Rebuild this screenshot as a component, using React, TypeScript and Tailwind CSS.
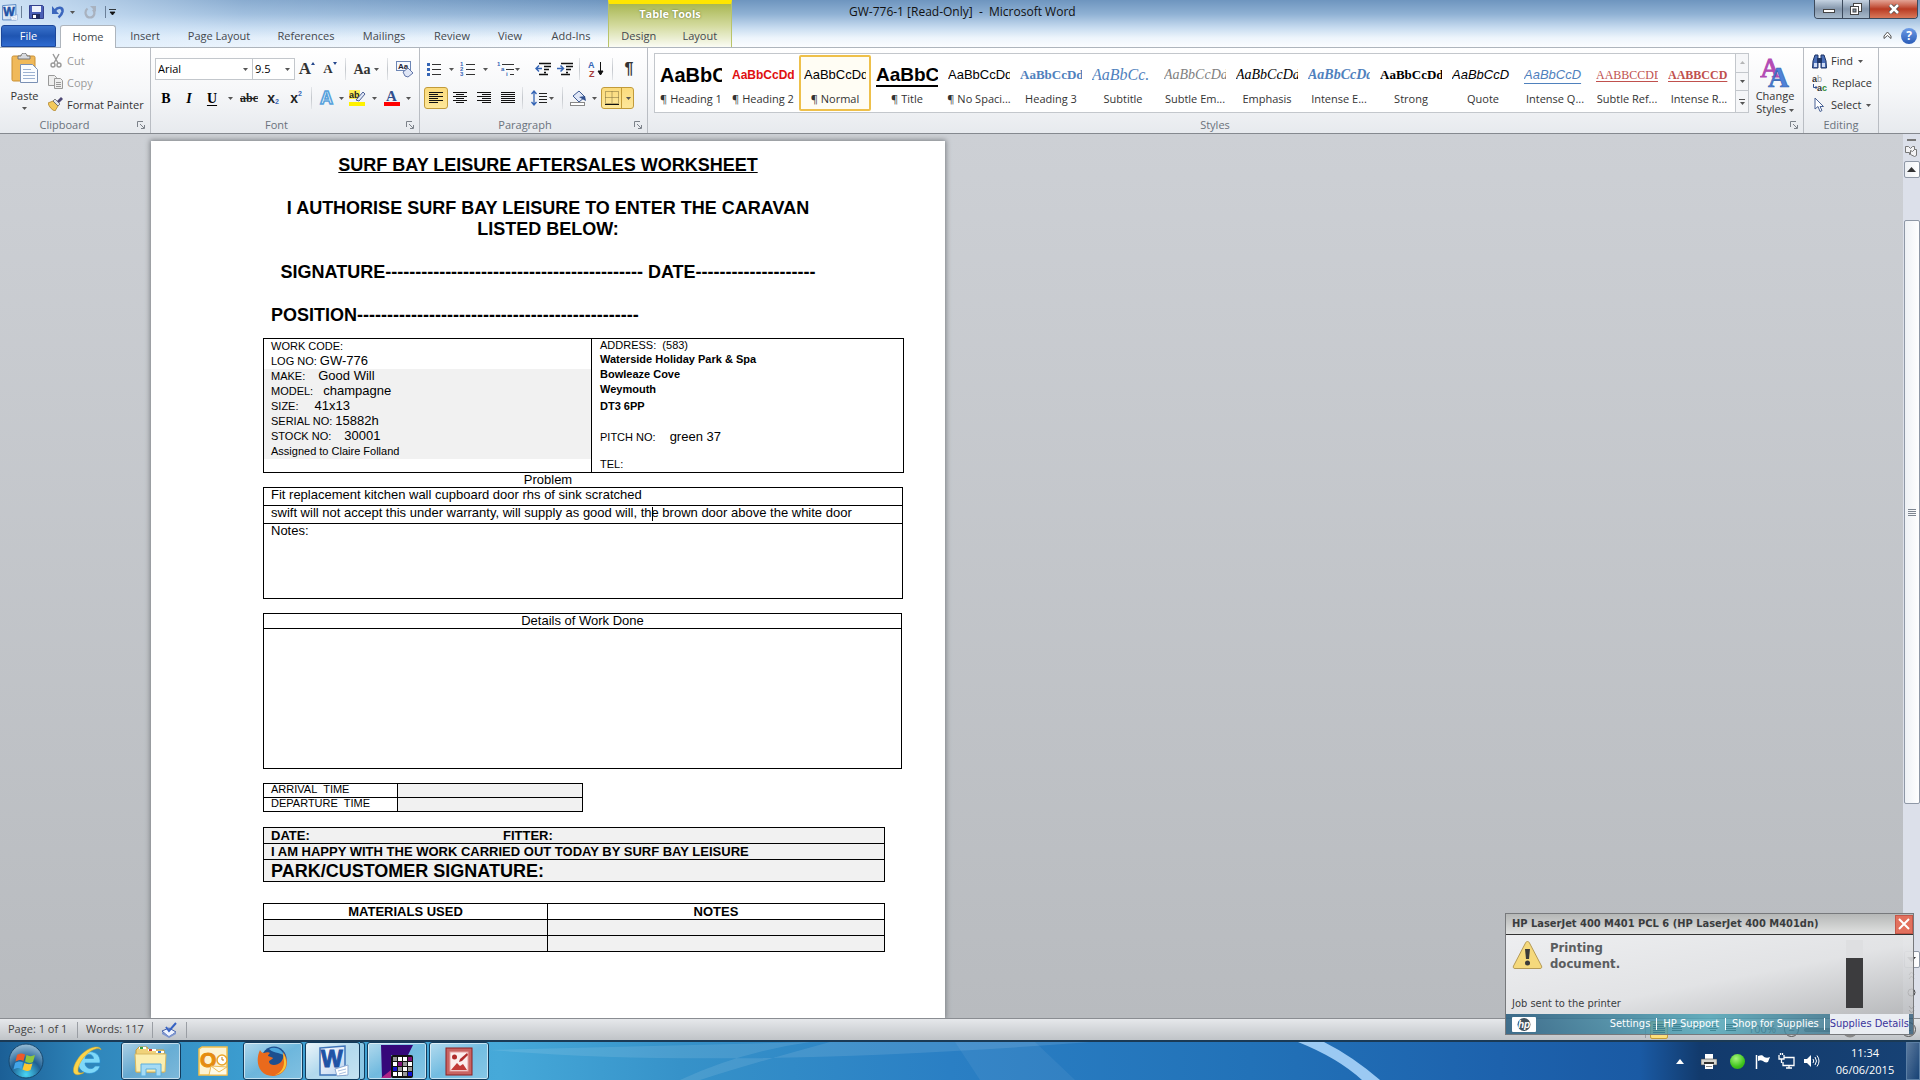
import type { ReactNode } from 'react'

const UI = "font-['Open_Sans',sans-serif]"

type Tab = { label: string; width: string }

const tabs: Tab[] = [
  { label: 'Insert', width: 'w-[58px]' },
  { label: 'Page Layout', width: 'w-[90px]' },
  { label: 'References', width: 'w-[84px]' },
  { label: 'Mailings', width: 'w-[72px]' },
  { label: 'Review', width: 'w-[64px]' },
  { label: 'View', width: 'w-[52px]' },
  { label: 'Add-Ins', width: 'w-[70px]' },
]

const SANS = "font-['Liberation_Sans',sans-serif]"
const SERIF = "font-['Liberation_Serif',serif]"

const styleItems = [
  { name: '¶ Heading 1', sample: 'AaBbC', cls: `${SANS} text-[20px] font-bold text-black` },
  { name: '¶ Heading 2', sample: 'AaBbCcDd', cls: `${SANS} text-[12px] font-bold text-[#e01010]` },
  { name: '¶ Normal', sample: 'AaBbCcDd', cls: `${SANS} text-[13px] text-black`, active: true },
  { name: '¶ Title', sample: 'AaBbC', cls: `${SANS} text-[19px] font-bold text-black underline underline-offset-4 decoration-2` },
  { name: '¶ No Spaci...', sample: 'AaBbCcDd', cls: `${SANS} text-[13px] text-black` },
  { name: 'Heading 3', sample: 'AaBbCcDd', cls: `${SERIF} text-[13px] font-bold text-[#4f81bd]` },
  { name: 'Subtitle', sample: 'AaBbCc.', cls: `${SERIF} text-[16px] italic text-[#4f81bd]` },
  { name: 'Subtle Em...', sample: 'AaBbCcDd', cls: `${SERIF} text-[14px] italic text-[#808080]` },
  { name: 'Emphasis', sample: 'AaBbCcDd', cls: `${SERIF} text-[14px] italic text-black` },
  { name: 'Intense E...', sample: 'AaBbCcDd', cls: `${SERIF} text-[14px] font-bold italic text-[#4f81bd]` },
  { name: 'Strong', sample: 'AaBbCcDd', cls: `${SERIF} text-[13px] font-bold text-black` },
  { name: 'Quote', sample: 'AaBbCcD', cls: `${SANS} text-[13px] italic text-black` },
  { name: 'Intense Q...', sample: 'AaBbCcD', cls: `${SANS} text-[13px] italic text-[#4f81bd] underline underline-offset-4` },
  { name: 'Subtle Ref...', sample: 'AABBCCDD', cls: `${SERIF} text-[12px] text-[#c0504d] underline underline-offset-2` },
  { name: 'Intense R...', sample: 'AABBCCD', cls: `${SERIF} text-[12px] font-bold text-[#c0504d] underline underline-offset-2` },
]

function Caret({ className = '' }: { className?: string }) {
  return (
    <svg width="5" height="3" viewBox="0 0 5 3" className={`shrink-0 ${className}`} aria-hidden>
      <path d="M0 0h5L2.5 3z" fill="#555" />
    </svg>
  )
}

function Tool({ label, className, children }: { label: string; className: string; children: ReactNode }) {
  return (
    <button aria-label={label} className={`flex h-[22px] shrink-0 items-center justify-center ${className}`}>
      {children}
    </button>
  )
}

function Sep({ className = 'mx-1' }: { className?: string }) {
  return <div className={`h-[22px] w-px shrink-0 bg-gradient-to-b from-[#e4e6e9] via-[#c3c7cc] to-[#e4e6e9] ${className}`} />
}

function Group({ title, launcher, className = '', children }: { title: string; launcher?: boolean; className?: string; children: ReactNode }) {
  return (
    <section className={`flex shrink-0 flex-col border-r border-[#b9bdc3] ${className}`}>
      <div className="h-[69px]">{children}</div>
      <div className="flex h-[16px] items-center">
        <span className={`grow text-center text-[#6a727c] ${launcher ? 'pr-2' : ''}`}>{title}</span>
        {launcher && (
          <button aria-label={`${title} options`} className="mr-[5px]">
            <svg width="8" height="8" viewBox="0 0 8 8" fill="none" stroke="#7c828a" aria-hidden>
              <path d="M.5 6V.5H6M3 3l4 4M7.500 4v3.500H4" />
            </svg>
          </button>
        )}
      </div>
    </section>
  )
}

function Bars({ widths, anchor = 'start' }: { widths: number[]; anchor?: 'start' | 'middle' | 'end' }) {
  return (
    <svg width="14" height="12" viewBox="0 0 14 12" aria-hidden>
      {widths.map((w, i) => (
        <rect key={i} x={anchor === 'start' ? 0 : anchor === 'end' ? 14 - w : (14 - w) / 2} y={i * 2} width={w} height="1" fill="#111" />
      ))}
    </svg>
  )
}

function ListIcon({ kind }: { kind: 'dots' | 'numbers' | 'levels' }) {
  return (
    <svg width="18" height="16" viewBox="0 0 18 16" aria-hidden>
      {kind === 'dots' && [2, 7, 12].map((y) => <rect key={y} x="1" y={y} width="3" height="3" fill="#3565b5" />)}
      {kind === 'numbers' &&
        ['1', '2', '3'].map((n, i) => (
          <text key={n} x="0" y={5 + i * 5} fontSize="6" fontWeight="bold" fill="#3565b5" fontFamily="Liberation Sans">
            {n}
          </text>
        ))}
      {kind === 'levels' ? (
        <>
          <text x="0" y="5" fontSize="6" fontWeight="bold" fill="#3565b5" fontFamily="Liberation Sans">1</text>
          <text x="4" y="10" fontSize="6" fontWeight="bold" fill="#3565b5" fontFamily="Liberation Sans">a</text>
          <text x="9" y="15" fontSize="6" fontWeight="bold" fill="#3565b5" fontFamily="Liberation Sans">i</text>
          <path d="M5 3.500h12M9 8.500h8M13 13.500h4" stroke="#333" />
        </>
      ) : (
        <path d="M6 3.500h9M6 8.500h9M6 13.500h9" stroke="#333" />
      )}
    </svg>
  )
}

function IndentIcon({ flip }: { flip?: boolean }) {
  return (
    <svg width="16" height="14" viewBox="0 0 16 14" aria-hidden>
      <path d="M4 1.500h12M9 4.500h7M9 7.500h5M9 10.500h2M4 12.500h9" stroke="#111" strokeWidth="1.500" />
      <path d={flip ? 'M0 6.500h6M3.500 3.500l3 3-3 3' : 'M7 6.500H1M4 3.500l-3 3 3 3'} stroke="#3565b5" strokeWidth="1.500" fill="none" />
    </svg>
  )
}

function WordLogo({ size }: { size: number }) {
  return (
    <svg width={size} height={size} viewBox="0 0 32 32" aria-hidden>
      <defs>
        <linearGradient id="wl" x1="0" y1="0" x2="1" y2="1">
          <stop offset="0" stopColor="#fff" />
          <stop offset="1" stopColor="#bcd3ef" />
        </linearGradient>
      </defs>
      <path d="M3 3l25-2v29H3z" fill="url(#wl)" stroke="#3f74b8" strokeWidth="1.500" />
      <text x="4" y="22" fontSize="23" fontWeight="bold" fill="#1f53a5" stroke="#1f53a5" fontFamily="Liberation Sans">W</text>
      <path d="M18 24l13-4 0 10-11 1z" fill="#fff" stroke="#8ba9d2" />
      <path d="M21 26l8-2M22 29l7-2" stroke="#a9bfdf" />
    </svg>
  )
}

function QuickAccess() {
  return (
    <div className="flex h-6 items-center">
      <span className="ml-[1px]"><WordLogo size={17} /></span>
      <div className="ml-[3px] h-3 w-px bg-[#6b8099]" />
      <button aria-label="Save" className="ml-[7px]">
        <svg width="15" height="14" viewBox="0 0 15 14" aria-hidden>
          <path d="M.5.5h13l1 1v12H.5z" fill="#4a5fb5" stroke="#34408c" />
          <rect x="3" y="1" width="9" height="6" fill="#eef2fb" />
          <rect x="3" y="9" width="8" height="5" fill="#1f2a5c" />
          <rect x="4" y="10" width="3" height="3" fill="#fff" />
        </svg>
      </button>
      <button aria-label="Undo" className="ml-2">
        <svg width="13" height="14" viewBox="0 0 13 14" aria-hidden>
          <path d="M3 5.500C6 1.500 11 2 10.500 6.500 10 9 8.500 11 6.500 12.500" fill="none" stroke="#3b66bd" strokeWidth="2.600" />
          <path d="M0 1v8h7z" fill="#3b66bd" />
        </svg>
      </button>
      <Caret className="ml-[5px]" />
      <button aria-label="Repeat" className="ml-[9px]">
        <svg width="12" height="13" viewBox="0 0 12 13" aria-hidden>
          <path d="M3.500 2.500C0 5.500 1.500 11.500 6 11.500c4.500 0 5.500-5 3-8" fill="none" stroke="#a9b2bf" strokeWidth="2.200" />
          <path d="M6 0h6v6z" fill="#a9b2bf" />
        </svg>
      </button>
      <div className="ml-[9px] h-3 w-px bg-[#6b8099]" />
      <button aria-label="Customize toolbar" className="ml-[3px]">
        <svg width="7" height="7" viewBox="0 0 7 7" aria-hidden>
          <path d="M0 .5h7M1 3h5L3.500 6z" stroke="#111" fill="#111" strokeWidth=".8" />
        </svg>
      </button>
    </div>
  )
}

function Header() {
  return (
    <header className="flex h-[47px] shrink-0 bg-[linear-gradient(to_bottom,#6e95bf_0px,#8fb1d4_14px,#c8dcf0_28px,#eef5fc_38px,#fbfdff_47px)] text-[#44484e]">
      <div className="flex w-[608px] shrink-0 flex-col bg-gradient-to-r from-[#d8eafb]/90 via-[#c9e0f7]/30 via-40% to-transparent">
        <QuickAccess />
        <nav className="flex grow items-stretch pt-px">
          <button className="ml-px w-[55px] rounded-t-[3px] border border-[#1c479a] bg-gradient-to-b from-[#3a72cb] via-[#1f55b2] to-[#2f6bd0] text-white">File</button>
          <button className="z-10 -mb-px ml-1 w-[56px] rounded-t-[3px] border border-b-0 border-[#aeb5bd] bg-white">Home</button>
          {tabs.map((t) => (
            <button key={t.label} className={`shrink-0 ${t.width}`}>{t.label}</button>
          ))}
        </nav>
      </div>
      <div className="flex w-[124px] shrink-0 flex-col border-x border-t-4 border-x-[#b9c46a] border-t-[#ffe600] bg-gradient-to-b from-[#a9b751] via-[#d3da9d] to-[#fbfcf4]">
        <div className="h-5 text-center leading-5 font-bold text-white [text-shadow:0_0_2px_#5c6620]">Table Tools</div>
        <nav className="flex grow items-stretch pt-px">
          <button className="w-[61px]">Design</button>
          <button className="w-[64px]">Layout</button>
        </nav>
      </div>
      <div className="flex grow flex-col">
        <div className="flex h-6 items-start">
          <h1 className="ml-[117px] grow text-[12px] leading-6 text-[#111]">GW-776-1 [Read-Only]&nbsp; -&nbsp; Microsoft Word</h1>
          <div className="mr-0.5 flex h-[19px] overflow-hidden rounded-b-[4px] border border-t-0 border-[#3c4a5c]">
            <button aria-label="Minimize" className="flex w-7 items-center justify-center border-r border-[#3c4a5c] bg-gradient-to-b from-[#c5d3e2] via-[#8496ab] via-50% to-[#a8bacb] pt-1">
              <span className="h-1 w-3 border border-[#444] bg-white" />
            </button>
            <button aria-label="Restore" className="flex w-[27px] items-center justify-center border-r border-[#3c4a5c] bg-gradient-to-b from-[#c5d3e2] via-[#8496ab] via-50% to-[#a8bacb]">
              <svg width="12" height="12" viewBox="0 0 12 12" aria-hidden>
                <rect x="3.500" y=".5" width="8" height="8" fill="#fff" stroke="#444" />
                <rect x=".5" y="3.500" width="8" height="8" fill="#fff" stroke="#444" />
                <rect x="3" y="6" width="3" height="3" fill="#8496ab" stroke="#444" />
              </svg>
            </button>
            <button aria-label="Close" className="flex w-[47px] items-center justify-center bg-gradient-to-b from-[#e3a395] via-[#b93a22] via-50% to-[#d9785a]">
              <svg width="12" height="10" viewBox="0 0 12 10" aria-hidden>
                <path d="M2 1l8 8M10 1L2 9" stroke="#444" strokeWidth="4" />
                <path d="M2 1l8 8M10 1L2 9" stroke="#fff" strokeWidth="2.600" />
              </svg>
            </button>
          </div>
        </div>
        <div className="flex grow items-center justify-end gap-[9px] pr-[3px]">
          <button aria-label="Minimize ribbon">
            <svg width="9" height="9" viewBox="0 0 9 9" aria-hidden>
              <path d="M1 5l3.500-4L8 5v2.500L4.500 4.500 1 7.500z" fill="#fff" stroke="#555" />
            </svg>
          </button>
          <button aria-label="Help" className="h-4 w-4 rounded-full bg-gradient-to-b from-[#6d9be6] to-[#2a5cb8] text-[12px] leading-4 font-bold text-white">?</button>
        </div>
      </div>
    </header>
  )
}

function Clipboard() {
  return (
    <Group title="Clipboard" launcher className="w-[151px]">
      <div className="flex pt-[5px]">
        <button className="ml-[6px] flex w-[37px] flex-col items-center">
          <svg width="28" height="31" viewBox="0 0 28 31" aria-hidden>
            <rect x="1" y="3" width="23" height="25" rx="1.500" fill="#f0b95a" stroke="#c98f32" />
            <path d="M7 6V3h3c0-4 6-4 6 0h3v3z" fill="#d8dade" stroke="#777" />
            <path d="M9.500 11.500h12l5 5v13h-17z" fill="#fafcff" stroke="#7a90b4" />
            <path d="M12 16.500h8M12 19.500h12M12 22.500h12M12 25.500h12" stroke="#9db2d2" />
          </svg>
          <span className="mt-1 leading-4 text-[#333]">Paste</span>
          <Caret className="mt-[3px]" />
        </button>
        <div className="ml-[5px] flex flex-col text-[#9a9a9a]">
          <button className="flex h-[22px] items-start gap-1 pl-px">
            <svg width="14" height="15" viewBox="0 0 14 15" fill="none" stroke="#999" strokeWidth="1.400" aria-hidden>
              <path d="M4 1l5 9M10 1L5 10" />
              <circle cx="4" cy="12" r="2" />
              <circle cx="10" cy="12" r="2" />
            </svg>
            <span className="leading-4">Cut</span>
          </button>
          <button className="flex h-[22px] items-start gap-1">
            <svg width="15" height="14" viewBox="0 0 15 14" fill="#eee" stroke="#999" aria-hidden>
              <path d="M.5.5h6l2 2v8h-8z" />
              <path d="M6.500 3.500h6l2 2v8h-8z" />
              <path d="M8 7.500h5M8 9.500h5M8 11.500h5" />
            </svg>
            <span className="leading-4">Copy</span>
          </button>
          <button className="flex h-[20px] items-start gap-1 text-[#333]">
            <svg width="15" height="14" viewBox="0 0 15 14" aria-hidden>
              <path d="M0 6l5-2 5 5-3 5C4 13 1 10 0 6z" fill="#f3c95c" stroke="#a97a1c" strokeWidth=".7" />
              <path d="M5 4l2-2 5 5-2 2z" fill="#dfe3ec" stroke="#555" strokeWidth=".7" />
              <path d="M9 4l4-4 2 2-4 4z" fill="#4c4674" />
            </svg>
            <span className="leading-4">Format Painter</span>
          </button>
        </div>
      </div>
    </Group>
  )
}

function FontGroup() {
  return (
    <Group title="Font" launcher className="w-[269px] pl-1">
      <div className="flex h-[22px] items-center mt-[10px]">
        <div className="relative flex w-[98px] items-center border border-[#c3c7cc] bg-white">
          <select aria-label="Font name" className="h-5 w-full appearance-none pl-[2px] leading-5 text-black">
            <option>Arial</option>
          </select>
          <Caret className="pointer-events-none absolute right-1" />
        </div>
        <div className="relative flex w-[42px] items-center border border-l-0 border-[#c3c7cc] bg-white">
          <select aria-label="Font size" className="h-5 w-full appearance-none pl-[2px] leading-5 text-black">
            <option>9.5</option>
          </select>
          <Caret className="pointer-events-none absolute right-1" />
        </div>
        <Tool label="Grow font" className={`w-6 ${SERIF} text-[17px] font-bold text-[#333]`}>
          A<svg width="4" height="3" viewBox="0 0 4 3" className="mb-3" aria-hidden><path d="M0 3h4L2 0z" fill="#24468c" /></svg>
        </Tool>
        <Tool label="Shrink font" className={`w-[22px] ${SERIF} text-[13px] font-bold text-[#333]`}>
          A<svg width="4" height="3" viewBox="0 0 4 3" className="mb-3" aria-hidden><path d="M0 0h4L2 3z" fill="#24468c" /></svg>
        </Tool>
        <Sep className="mr-[2px] ml-1" />
        <Tool label="Change case" className={`w-9 gap-[3px] ${SERIF} text-[14px] font-bold text-[#333]`}>
          Aa<Caret />
        </Tool>
        <Sep className="mx-[3px]" />
        <Tool label="Clear formatting" className="w-7">
          <svg width="18" height="17" viewBox="0 0 18 17" aria-hidden>
            <rect x=".5" y=".5" width="14" height="9" fill="#f6f9ff" stroke="#6d86b5" />
            <text x="2" y="8" fontSize="8" fontWeight="bold" fill="#223" fontFamily="Liberation Sans">Aa</text>
            <path d="M7 11l5-4 5 5-5 4-3-1z" fill="#dfe6f6" stroke="#6175a8" />
          </svg>
        </Tool>
      </div>
      <div className="mt-[7px] flex h-[22px] items-center text-[14px]">
        <Tool label="Bold" className={`w-[22px] ${SERIF} font-bold text-black`}>B</Tool>
        <Tool label="Italic" className={`w-6 ${SERIF} font-bold text-black italic`}>I</Tool>
        <Tool label="Underline" className={`w-[22px] ${SERIF} font-bold text-black underline underline-offset-2`}>U</Tool>
        <Tool label="Underline options" className="w-[14px]"><Caret /></Tool>
        <Tool label="Strikethrough" className={`w-6 ${SERIF} text-[12px] font-bold text-[#222] line-through`}>abc</Tool>
        <Tool label="Subscript" className={`w-6 ${SANS} font-bold text-[#222]`}>
          x<span className="mt-2 text-[7px] text-[#3565b5]">2</span>
        </Tool>
        <Tool label="Superscript" className={`w-[22px] ${SANS} font-bold text-[#222]`}>
          x<span className="mb-2 text-[7px] text-[#3565b5]">2</span>
        </Tool>
        <Sep />
        <Tool label="Text effects" className="w-[30px] gap-1">
          <svg width="16" height="16" viewBox="0 0 16 16" aria-hidden>
            <text x="1" y="14" fontSize="18" fontWeight="bold" fill="#fff" stroke="#58a2dc" strokeWidth="1.600" fontFamily="Liberation Sans">A</text>
          </svg>
          <Caret />
        </Tool>
        <Tool label="Highlight" className="w-[34px] gap-[6px]">
          <svg width="17" height="16" viewBox="0 0 17 16" aria-hidden>
            <rect x="0" y="0" width="11" height="9" fill="#ffee55" />
            <text x="0" y="8" fontSize="9" fontWeight="bold" fill="#222" fontFamily="Liberation Sans">ab</text>
            <path d="M7 10l7-8 2 2-6 7z" fill="#dfe6f6" stroke="#4e6296" />
            <rect x="0" y="12" width="16" height="4" fill="#fff200" />
          </svg>
          <Caret />
        </Tool>
        <Tool label="Font color" className="w-[34px] gap-[6px]">
          <svg width="16" height="16" viewBox="0 0 16 16" aria-hidden>
            <text x="2" y="11" fontSize="15" fontWeight="bold" fill="#31508f" fontFamily="Liberation Serif">A</text>
            <rect x="0" y="12" width="16" height="4" fill="#f00" />
          </svg>
          <Caret />
        </Tool>
      </div>
    </Group>
  )
}

function Paragraph() {
  return (
    <Group title="Paragraph" launcher className="w-[228px] pl-1">
      <div className="mt-[10px] flex h-[22px] items-center">
        <Tool label="Bullets" className="w-8 gap-[5px]"><ListIcon kind="dots" /><Caret /></Tool>
        <Tool label="Numbering" className="w-9 gap-[5px]"><ListIcon kind="numbers" /><Caret /></Tool>
        <Tool label="Multilevel list" className="w-8"><ListIcon kind="levels" /><Caret /></Tool>
        <div className="w-[8px]" />
        <Tool label="Decrease indent" className="w-[22px]"><IndentIcon /></Tool>
        <Tool label="Increase indent" className="w-[22px]"><IndentIcon flip /></Tool>
        <Sep className="mr-1 ml-[3px]" />
        <Tool label="Sort" className="w-6">
          <svg width="16" height="18" viewBox="0 0 16 18" aria-hidden>
            <text x="0" y="8" fontSize="9" fontWeight="bold" fill="#3565b5" fontFamily="Liberation Sans">A</text>
            <text x="1" y="17" fontSize="9" fontWeight="bold" fill="#a33a3a" fontFamily="Liberation Sans">Z</text>
            <path d="M12.500 2v12M10 11l2.500 4 2.500-4z" stroke="#111" fill="#111" />
          </svg>
        </Tool>
        <Sep />
        <Tool label="Show marks" className={`w-6 ${SANS} text-[16px] font-bold text-[#333]`}>¶</Tool>
      </div>
      <div className="mt-[7px] flex h-[22px] items-center">
        <Tool label="Align left" className="w-6 rounded-[3px] border border-[#c29b3a] bg-gradient-to-b from-[#fbdb7c] to-[#fde79a]"><Bars widths={[14, 9, 14, 9, 14, 9]} /></Tool>
        <Tool label="Center" className="w-6"><Bars widths={[14, 8, 14, 8, 14, 8]} anchor="middle" /></Tool>
        <Tool label="Align right" className="w-6"><Bars widths={[14, 9, 14, 9, 14, 9]} anchor="end" /></Tool>
        <Tool label="Justify" className="w-6"><Bars widths={[14, 14, 14, 14, 14, 14]} /></Tool>
        <Sep className="mr-[5px] ml-[2px]" />
        <Tool label="Line spacing" className="w-7 gap-[2px]">
          <svg width="16" height="16" viewBox="0 0 16 16" aria-hidden>
            <path d="M3 1v14M.5 4L3 1l2.500 3M.5 12L3 15l2.500-3" stroke="#3565b5" strokeWidth="1.300" fill="none" />
            <path d="M8 3.500h8M8 6.500h8M8 9.500h8M8 12.500h8" stroke="#222" />
          </svg>
          <Caret />
        </Tool>
        <Sep className="mr-1 ml-[6px]" />
        <Tool label="Shading" className="w-8 gap-[5px]">
          <svg width="17" height="16" viewBox="0 0 17 16" aria-hidden>
            <path d="M3 6l6-5 6 6-6 5z" fill="#dfe6f6" stroke="#3f5b93" />
            <path d="M9 7l6-1 1 5-2-1z" fill="#31508f" />
            <rect x=".5" y="12.500" width="14" height="3" fill="#fff" stroke="#888" />
          </svg>
          <Caret />
        </Tool>
        <Tool label="Borders" className="ml-[2px] w-[33px] rounded-[3px] border border-[#c29b3a] bg-gradient-to-b from-[#fbdb7c] to-[#fde79a]">
          <svg width="14" height="14" viewBox="0 0 14 14" aria-hidden>
            <path d="M.5.5h13v12H.5zM7 .5v12M.5 6.500h13" stroke="#7a6a38" strokeDasharray="1 1" fill="none" />
            <path d="M0 13.500h14" stroke="#111" />
          </svg>
          <span className="ml-[2px] h-full w-px bg-[#c29b3a]" />
          <Caret className="ml-1" />
        </Tool>
      </div>
    </Group>
  )
}

function StylesGroup() {
  return (
    <Group title="Styles" launcher className="grow">
      <div className="flex pt-[5px]">
        <div className="ml-[6px] flex h-[60px] border border-[#c3c7cc] bg-white">
          {styleItems.map((s) => (
            <button
              key={s.name}
              className={`my-px flex w-[72px] shrink-0 flex-col items-center rounded-[2px] ${s.active ? 'border-2 border-[#eec04a] bg-[#fffdf4]' : 'border-2 border-transparent'}`}
            >
              <span className={`flex h-[36px] w-[62px] items-center overflow-hidden leading-6 whitespace-nowrap ${s.cls}`}>{s.sample}</span>
              <span className="leading-3 whitespace-nowrap text-[#333]">{s.name}</span>
            </button>
          ))}
          <div className="flex w-[13px] flex-col divide-y divide-[#c3c7cc] border-l border-[#c3c7cc] bg-[#f5f6f8]">
            <button aria-label="Scroll up" className="flex grow items-center justify-center"><Caret className="rotate-180 opacity-40" /></button>
            <button aria-label="Scroll down" className="flex grow items-center justify-center"><Caret /></button>
            <button aria-label="More styles" className="flex grow flex-col items-center justify-center gap-[2px]">
              <span className="h-px w-[6px] bg-[#555]" />
              <Caret />
            </button>
          </div>
        </div>
        <button className="ml-[3px] flex w-[46px] flex-col items-center">
          <svg width="30" height="36" viewBox="0 0 30 36" aria-hidden>
            <text x="0" y="24" fontSize="28" fill="#b34bb4" stroke="#b34bb4" fontFamily="Liberation Serif">A</text>
            <text x="8" y="34" fontSize="29" fontWeight="bold" fill="#4f82d8" stroke="#2f5cab" strokeWidth=".6" fontFamily="Liberation Serif">A</text>
          </svg>
          <span className="leading-[13px] text-[#333]">Change<br />Styles <Caret className="inline" /></span>
        </button>
      </div>
    </Group>
  )
}

function Editing() {
  return (
    <Group title="Editing" className="w-[75px]">
      <div className="flex flex-col pt-[2px] pl-2 text-[#333]">
        <button className="flex h-[22px] items-center gap-1">
          <svg width="15" height="16" viewBox="0 0 15 16" aria-hidden>
            <path d="M1 8l2-6h3v13H.5zM14 8l-2-6H9v13h5.500z" fill="#4a6fb8" stroke="#1e3566" />
            <rect x="5" y="5" width="5" height="5" fill="#1e3566" />
            <rect x="2" y="10" width="3" height="4" fill="#cfdcf5" />
            <rect x="10" y="10" width="3" height="4" fill="#cfdcf5" />
          </svg>
          <span className="leading-5">Find</span>
          <Caret className="ml-px" />
        </button>
        <button className="flex h-[22px] items-center gap-1">
          <svg width="16" height="17" viewBox="0 0 16 17" aria-hidden>
            <text x="0" y="7" fontSize="9" fontWeight="bold" fill="#333" fontFamily="Liberation Sans">a</text>
            <text x="5" y="7" fontSize="9" fill="#999" fontFamily="Liberation Sans">b</text>
            <text x="5" y="16" fontSize="9" fontWeight="bold" fill="#333" fontFamily="Liberation Sans">a</text>
            <text x="10" y="16" fontSize="9" fontWeight="bold" fill="#2e8b35" fontFamily="Liberation Sans">c</text>
            <path d="M1.500 9v3.500H5M3.500 11l1.500 1.500L3.500 14" stroke="#31508f" fill="none" />
          </svg>
          <span className="leading-5">Replace</span>
        </button>
        <button className="flex h-[22px] items-center gap-1">
          <svg width="15" height="16" viewBox="0 0 15 16" aria-hidden>
            <path d="M3 1v11l3-2.500 2 5 2-1-2-4h3.500z" fill="#fff" stroke="#4a6396" />
          </svg>
          <span className="leading-5">Select</span>
          <Caret className="ml-px" />
        </button>
      </div>
    </Group>
  )
}

// A caption in small type followed by its filled-in value
function Field({ caption, value = '', gap = '' }: { caption: string; value?: string; gap?: string }) {
  return (
    <p className="flex h-[15px] items-baseline px-[7px] leading-[14px]">
      <span className="text-[11px]">{caption}</span>
      <span className={`text-[13px] ${gap}`}>{value}</span>
    </p>
  )
}

function Worksheet() {
  return (
    <article className={`ml-[151px] w-[794px] shrink-0 bg-white px-[112px] pt-[14px] text-black shadow-[0_0_5px_1px_#7d8085] ${SANS}`}>
      <div className="text-[18px] leading-[21px] font-bold">
        <h2 className="text-center underline">SURF BAY LEISURE AFTERSALES WORKSHEET</h2>
        <p className="mt-[22px] text-center">I AUTHORISE SURF BAY LEISURE TO ENTER THE CARAVAN<br />LISTED BELOW:</p>
        <p className="mt-[22px] text-center whitespace-nowrap">
          SIGNATURE------------------------------------------- DATE--------------------
        </p>
        <p className="mt-[22px] pl-2">POSITION-----------------------------------------------</p>
      </div>

      <table className="mt-3 w-[641px] table-fixed border-collapse">
        <tbody>
          <tr className="h-[134px] align-top">
            <td className="w-[328px] border border-black p-0">
              <Field caption="WORK CODE:" />
              <Field caption="LOG NO:" value="GW-776" gap="ml-[3px]" />
              <div className="bg-[#f1f1f1]">
                <Field caption="MAKE:" value="Good Will" gap="ml-[13px]" />
                <Field caption="MODEL:" value="champagne" gap="ml-[10px]" />
                <Field caption="SIZE:" value="41x13" gap="ml-[16px]" />
                <Field caption="SERIAL NO:" value="15882h" gap="ml-[3px]" />
                <Field caption="STOCK NO:" value="30001" gap="ml-[13px]" />
                <Field caption="Assigned to Claire Folland" />
              </div>
            </td>
            <td className="border border-black px-2 py-0 text-[11px] leading-[14px]">
              <p className="-mt-px">ADDRESS:&nbsp; (583)</p>
              <p className="font-bold">Waterside Holiday Park &amp; Spa</p>
              <p className="mt-px font-bold">Bowleaze Cove</p>
              <p className="mt-px font-bold">Weymouth</p>
              <p className="mt-[3px] font-bold">DT3 6PP</p>
              <p className="mt-[17px]">PITCH NO:<span className="ml-[14px] text-[13px]">green 37</span></p>
              <p className="mt-[13px]">TEL:</p>
            </td>
          </tr>
        </tbody>
      </table>

      <p className="text-center text-[13px] leading-[14px]">Problem</p>

      <table className="w-[640px] border-collapse text-[13px] leading-[14px]">
        <tbody className="align-top">
          <tr className="h-[18px]"><td className="border border-black px-[7px] py-0">Fit replacement kitchen wall cupboard door rhs of sink scratched</td></tr>
          <tr className="h-[18px]">
            <td className="border border-black px-[7px] py-0">
              swift will not accept this under warranty, will supply as good will, th<span className="-mr-px inline-block h-[14px] w-px bg-black align-middle" />e brown door above the white door
            </td>
          </tr>
          <tr className="h-[75px]"><td className="border border-black px-[7px] py-0">Notes:</td></tr>
        </tbody>
      </table>

      <table className="mt-[14px] w-[639px] border-collapse text-[13px] leading-[12px]">
        <thead>
          <tr className="h-[15px]"><th className="border border-black p-0 font-normal">Details of Work Done</th></tr>
        </thead>
        <tbody>
          <tr className="h-[140px]"><td className="border border-black" /></tr>
        </tbody>
      </table>

      <table className="mt-[14px] w-[320px] border-collapse text-[11px] leading-[11px]">
        <tbody className="align-top">
          {['ARRIVAL', 'DEPARTURE'].map((t) => (
            <tr key={t} className="h-[14px]">
              <th scope="row" className="w-[134px] border border-black px-[7px] py-0 text-left font-normal">{t}&nbsp; TIME</th>
              <td className="border border-black bg-[#f1f1f1] p-0" />
            </tr>
          ))}
        </tbody>
      </table>

      <table className="mt-[15px] w-[622px] border-collapse bg-[#f1f1f1] text-[13px] leading-[14px] font-bold">
        <tbody>
          <tr className="h-4"><td className="border border-black px-[7px] py-0"><span className="inline-block w-[232px]">DATE:</span>FITTER:</td></tr>
          <tr className="h-4"><td className="border border-black px-[7px] py-0">I AM HAPPY WITH THE WORK CARRIED OUT TODAY BY SURF BAY LEISURE</td></tr>
          <tr className="h-[22px]"><td className="border border-black px-[7px] py-0 text-[18px] leading-[20px]">PARK/CUSTOMER SIGNATURE:</td></tr>
        </tbody>
      </table>

      <table className="mt-[21px] w-[622px] border-collapse text-[13px] leading-[14px]">
        <thead>
          <tr className="h-4">
            <th className="w-[284px] border border-black p-0">MATERIALS USED</th>
            <th className="border border-black p-0">NOTES</th>
          </tr>
        </thead>
        <tbody className="bg-[#f1f1f1]">
          {[0, 1].map((i) => (
            <tr key={i} className="h-4">
              <td className="border border-black p-0" />
              <td className="border border-black p-0" />
            </tr>
          ))}
        </tbody>
      </table>
    </article>
  )
}

function ScrollBar() {
  const box = 'flex w-4 shrink-0 items-center justify-center rounded-[2px] border border-[#8f98a6] bg-gradient-to-r from-[#eef1f5] to-white'
  return (
    <div className="flex w-[17px] shrink-0 flex-col items-center bg-[#dce0ea]">
      <span className="mt-[5px] h-[2px] w-[9px] bg-[#777]" />
      <button aria-label="View ruler" className="mt-[3px] h-[14px]">
        <svg width="13" height="14" viewBox="0 0 13 14" fill="#f3f3f5" stroke="#777" aria-hidden>
          <path d="M.5 2.500h3l2 2 2-2h2v6h-3l-2 2v-2h-4z" />
          <path d="M5.500 6.500l2 1 2-2h2v6l-2 1-4-2z" />
        </svg>
      </button>
      <button aria-label="Scroll up" className={`${box} mt-[3px] h-[17px]`}>
        <svg width="9" height="5" viewBox="0 0 9 5" aria-hidden><path d="M0 5h9L4.500 0z" fill="#333" /></svg>
      </button>
      <div className={`${box} mt-[42px] h-[584px] flex-col gap-px`}>
        {[0, 1, 2, 3].map((i) => <span key={i} className="h-px w-2 bg-[#7d8590]" />)}
      </div>
      <div className="grow" />
      <button aria-label="Scroll down" className={`${box} h-[17px]`}>
        <svg width="9" height="5" viewBox="0 0 9 5" aria-hidden><path d="M0 0h9L4.500 5z" fill="#333" /></svg>
      </button>
      <svg width="9" height="49" viewBox="0 0 9 49" fill="none" stroke="#444" className="mb-px" aria-hidden>
        <path d="M2 7l2.500-3L7 7M2 11l2.500-3L7 11M2 38l2.500 3L7 38M2 42l2.500 3L7 42" />
        <circle cx="4.500" cy="24.500" r="3.500" />
      </svg>
    </div>
  )
}

function StatusBar() {
  return (
    <footer className="flex h-[22px] shrink-0 items-center border-t border-[#8a8d92] bg-gradient-to-b from-[#e6e8eb] to-[#c0c4c8] text-[#444]">
      <button className="ml-2 w-[69px] text-left">Page: 1 of 1</button>
      <div className="h-4 w-px bg-[#9a9ea4]" />
      <button className="ml-2 w-[66px] text-left">Words: 117</button>
      <div className="h-4 w-px bg-[#9a9ea4]" />
      <button aria-label="Proofing" className="mx-2">
        <svg width="17" height="16" viewBox="0 0 17 16" aria-hidden>
          <path d="M1 9l7-3 7 4-7 5z" fill="#eef3ff" stroke="#4662a8" />
          <path d="M1 10v2l7 4 7-4v-2l-7 4z" fill="#7d95cf" />
          <path d="M5 5l3 4 7-8" stroke="#3763c4" strokeWidth="2" fill="none" />
        </svg>
      </button>
      <div className="h-4 w-px bg-[#9a9ea4]" />
      <div className="ml-auto flex items-center pr-1">
        <span className="mr-1 h-4 w-px bg-[#9a9ea4]" />
        <button aria-label="Print layout" className="flex h-[18px] w-[18px] items-center justify-center rounded-[2px] border border-[#c29b3a] bg-[#ffe07a]"><Bars widths={[12, 12, 12, 12, 12]} anchor="middle" /></button>
        <button aria-label="Full screen reading" className="flex w-[18px] justify-center"><Bars widths={[10, 10, 10, 10]} anchor="middle" /></button>
        <button aria-label="Web layout" className="flex w-[18px] justify-center"><Bars widths={[10, 10, 10]} anchor="middle" /></button>
        <button aria-label="Outline" className="flex w-[18px] justify-center"><Bars widths={[9, 6, 9, 6]} anchor="middle" /></button>
        <button aria-label="Draft" className="flex w-[18px] justify-center"><Bars widths={[10, 10, 10, 10]} anchor="middle" /></button>
        <span className="w-11 text-center">100%</span>
        <button aria-label="Zoom out" className="h-[15px] w-[15px] rounded-full border border-[#555] leading-3">−</button>
        <input type="range" aria-label="Zoom" className="mx-1 h-1 w-[94px] accent-[#888]" />
        <button aria-label="Zoom in" className="h-[15px] w-[15px] rounded-full border border-[#555] leading-3">+</button>
      </div>
    </footer>
  )
}

const TAHOMA = "font-['DejaVu_Sans_Condensed','Noto_Sans',sans-serif]"

function PrinterPopup() {
  return (
    <aside className={`absolute right-[6px] bottom-[45px] flex h-[122px] w-[409px] flex-col border border-[#77797c] text-[#3a3c3e] ${TAHOMA}`}>
      <div className="flex h-[21px] items-center border-b border-[#333] bg-gradient-to-b from-[#b5b7b6]/95 to-[#e3e4e3]/95 pl-[6px]">
        <h2 className="grow pt-px text-[11px] font-bold whitespace-nowrap">HP LaserJet 400 M401 PCL 6 (HP LaserJet 400 M401dn)</h2>
        <button aria-label="Close notification" className="flex h-[19px] w-[18px] items-center justify-center border border-[#c4574a] bg-[#e2705d]">
          <svg width="12" height="12" viewBox="0 0 12 12" stroke="#fff" strokeWidth="2" aria-hidden><path d="M1 1l10 10M11 1L1 11" /></svg>
        </button>
      </div>
      <div className="flex grow bg-gradient-to-br from-[#f0f1f3]/95 via-[#e4e5e7]/95 via-55% to-[#b8b9bb]/80 pt-[5px] pl-[6px]">
        <div className="flex grow flex-col">
          <div className="flex gap-[7px]">
            <svg width="31" height="30" viewBox="0 0 31 30" aria-hidden>
              <path d="M15.500 1.500c1 0 1.500.5 2 1.500l12 23c.7 1.500 0 2.500-1.500 2.500H3c-1.500 0-2.200-1-1.500-2.500l12-23c.5-1 1-1.500 2-1.500z" fill="#f5d97c" stroke="#b59a55" />
              <path d="M13 9h5l-1 10h-3z" fill="#3a3a3a" />
              <circle cx="15.500" cy="23" r="2.500" fill="#3a3a3a" />
            </svg>
            <p className="text-[13px] leading-4 font-bold text-[#5b5d5f]">Printing<br />document.</p>
          </div>
          <p className="mt-6 text-[11px] leading-[15px]">Job sent to the printer</p>
        </div>
        <div className="mr-[50px] flex h-[68px] w-[17px] flex-col bg-[#dedfe1]"><div className="mt-[18px] grow bg-[#3c3c3e]" /></div>
      </div>
      <div className="flex h-5 shrink-0 items-center bg-gradient-to-r from-[#2f6283]/90 via-[#4fa9bb]/80 to-[#2f5875]/80 pl-[6px] text-[11px] text-white">
        <svg width="24" height="15" viewBox="0 0 24 15" aria-hidden>
          <rect width="24" height="15" rx="1" fill="#fff" />
          <circle cx="12" cy="7.500" r="6.500" fill="#41535f" />
          <text x="6" y="11" fontSize="10" fontStyle="italic" fontWeight="bold" fill="#fff" fontFamily="Liberation Sans">hp</text>
        </svg>
        <nav className="ml-auto flex h-full items-center">
          <a href="#settings">Settings</a>
          <span className="mx-[6px] h-3 w-px bg-white" />
          <a href="#support">HP Support</a>
          <span className="mx-[6px] h-3 w-px bg-white" />
          <a href="#shop">Shop for Supplies</a>
          <span className="mx-[5px] h-3 w-px bg-white" />
          <a href="#supplies" className="mr-1 flex h-full items-center bg-[#f2f3f8]/95 text-[#3b349c]">Supplies Details</a>
        </nav>
      </div>
    </aside>
  )
}

const RUNNING = 'w-[60px] rounded-[3px] border border-[#123b5c] bg-gradient-to-br from-white/60 via-white/25 to-white/35 shadow-[inset_0_0_0_1px_#ffffff90]'

function TaskButton({ label, className = RUNNING, children }: { label: string; className?: string; children: ReactNode }) {
  return (
    <button aria-label={label} className={`flex h-full shrink-0 items-center justify-center ${className}`}>
      {children}
    </button>
  )
}

function Taskbar() {
  return (
    <div className="relative flex h-10 shrink-0 items-center overflow-hidden border-t-2 border-[#1b3a55] bg-[linear-gradient(to_right,#1b5f96_0px,#2f86bb_90px,#3b9ccf_240px,#46a9d9_500px,#3692c9_680px,#2a7fc4_950px,#2272b8_1250px,#1d62ad_1500px,#1a5aa4_1640px,#123a6c_1700px,#174275_1919px)] text-white">
      <svg className="absolute inset-0 h-full w-full" viewBox="0 0 1920 38" preserveAspectRatio="none" aria-hidden>
        <path d="M1298 0h26q28 14 56 38h-18q-24-22-64-38z" fill="#a9d4fa" opacity=".9" />
        <path d="M490 8q240 20 600-8h-260q-80 22-130 38h-20q60-28 130-38z" fill="#fff" opacity=".1" />
        <path d="M955 0h80l40 38H980z" fill="#fff" opacity=".06" />
      </svg>
      <button aria-label="Start" className="relative mr-7 ml-2 shrink-0">
        <svg width="36" height="36" viewBox="0 0 36 36" aria-hidden>
          <defs>
            <radialGradient id="orb" cx=".5" cy=".9" r=".9">
              <stop offset="0" stopColor="#48d6f5" />
              <stop offset=".5" stopColor="#1e5f93" />
              <stop offset="1" stopColor="#9cc0d8" />
            </radialGradient>
          </defs>
          <circle cx="18" cy="18" r="17" fill="url(#orb)" stroke="#16476e" />
          <path d="M9 12c3-2 5-2 8-.5l-1.500 6.500c-3-1.500-5-1-8 .5z" fill="#ee5a28" />
          <path d="M18.500 12c3 1.500 5 1.500 8.500 0l-2 7c-3 1.500-5 1-8-.5z" fill="#8cc63e" />
          <path d="M7 20c3-1.500 5-2 8-.5L13.500 26c-3-1.500-5-1-8 .5z" fill="#42a5e8" />
          <path d="M16.500 20c3 1.500 5 1.500 8 .5l-2 6.500c-3 1.500-5 1-8-.5z" fill="#fdc82f" />
        </svg>
      </button>
      <button aria-label="Internet Explorer" className="relative mr-[17px] shrink-0">
        <svg width="32" height="32" viewBox="0 0 32 32" aria-hidden>
          <path d="M28 18H13c0 6 8 7.500 10 3h5c-3 11-22 10-22-4C6 3 30 3 28 18zM13 13.500h8.500c-.5-5.500-8-5.500-8.500 0z" fill="#7ed8f8" stroke="#2a8fd0" strokeWidth=".7" fillRule="evenodd" />
          <path d="M29 5c0-5-11-4-19 4C3 16-1 26 3 29c2 1.500 6 .5 9-1.500-4 1-6 .5-6-2C6 21 9 15 14 10c6-6 13-8 15-5z" fill="#fbd44b" stroke="#d6a520" strokeWidth=".5" />
        </svg>
      </button>
      <div className="relative flex h-full items-center gap-[2px]">
        <TaskButton label="Windows Explorer">
          <svg width="34" height="32" viewBox="0 0 34 32" aria-hidden>
            <path d="M2 5l3-3h8l2 3h15v22H2z" fill="#f0d27a" stroke="#c39a3c" />
            <path d="M5 3h7M14 5h8M22 7h8" stroke="#fff" strokeWidth="2" />
            <path d="M6 3h3" stroke="#2ea14a" strokeWidth="2" />
            <path d="M15 5h3" stroke="#d0392b" strokeWidth="2" />
            <path d="M24 7h3" stroke="#3277d0" strokeWidth="2" />
            <path d="M1 9h31l-1 18H2z" fill="#fbeeb0" stroke="#d8b962" />
            <path d="M7 19h20v12h-5v-7H12v7H7z" fill="#a5dbf5" stroke="#5aaede" />
          </svg>
        </TaskButton>
        <TaskButton label="Outlook" className="w-[58px]">
          <svg width="31" height="31" viewBox="0 0 31 31" aria-hidden>
            <path d="M2 3l3-2h25v28H2z" fill="#fdf3d2" stroke="#f3c04a" strokeWidth="1.500" />
            <text x="3" y="21" fontSize="21" fontWeight="bold" fill="#e58c10" stroke="#e58c10" fontFamily="Liberation Sans">O</text>
            <circle cx="25" cy="14" r="5" fill="#fff" stroke="#e9a52a" strokeWidth="1.500" />
            <path d="M25 11v3h2" stroke="#c77a10" fill="none" />
            <path d="M14 20l16 1v8H12z" fill="#fffbe9" stroke="#eebb55" />
            <path d="M14 20l8 6 8-5" fill="none" stroke="#eebb55" />
          </svg>
        </TaskButton>
        <TaskButton label="Firefox">
          <svg width="32" height="32" viewBox="0 0 32 32" aria-hidden>
            <circle cx="17" cy="14" r="12.500" fill="#1d4f8f" />
            <path d="M12 4c6-3 13 0 15 6l-6-2c-3-1-6-1-9-4z" fill="#4ba5dc" />
            <path d="M3 5c1 2 2 3 4 3 2-1 5-1 6 0-1 1-2 2-2 3 2 1 4 1 5 2-1 2-4 2-4 4 1 4 8 4 12 0 3-4 3-7 2-10 7 8 5 22-9 24C3 32-3 18 3 5z" fill="#ea6a1c" />
            <path d="M26 8c6 9 4 20-8 22 7-3 9-8 9-13z" fill="#fbc437" />
          </svg>
        </TaskButton>
        <div className="flex h-full w-[60px]">
          <TaskButton label="Microsoft Word" className="w-[55px] rounded-[3px] border border-[#123b5c] bg-gradient-to-br from-white/90 via-white/60 to-white/70">
            <WordLogo size={32} />
          </TaskButton>
          <span className="h-full w-[5px] rounded-r-[3px] border border-l-0 border-[#123b5c] bg-white/40" />
        </div>
        <TaskButton label="Database">
          <svg width="33" height="33" viewBox="0 0 33 33" aria-hidden>
            <path d="M0 0h32l-5 10H10v23l-9 0z" fill="#35087a" />
            <path d="M0 33l10-8v8z" fill="#b02486" />
            <rect x="10" y="10" width="22" height="23" rx="2" fill="#111" />
            {['#999', '#fff', '#fff', '#80107a', '#fff', '#80107a', '#999', '#fff', '#1414cc', '#999', '#fff', '#999', '#fff', '#fff', '#999', '#1414cc'].map((c, i) => (
              <rect key={i} x={12 + (i % 4) * 5} y={12 + Math.floor(i / 4) * 5} width="4" height="4" fill={c} />
            ))}
          </svg>
        </TaskButton>
        <TaskButton label="Picture Manager">
          <svg width="28" height="29" viewBox="0 0 28 29" aria-hidden>
            <rect x="1" y="1" width="26" height="27" fill="#c86462" stroke="#8e1f20" />
            <rect x="5" y="5" width="18" height="19" fill="#fbeeee" stroke="#e5a0a0" />
            <circle cx="9.500" cy="10" r="2.500" fill="#b02c2c" />
            <path d="M22 6l-7 6-1 3 3-1 6-6z" fill="#b02c2c" />
            <path d="M6 23l6-7 3 3 3-2 4 6z" fill="#c23a38" />
          </svg>
        </TaskButton>
      </div>
      <div className="relative ml-auto flex h-full items-center">
        <button aria-label="Show hidden icons" className="mr-[17px]">
          <svg width="8" height="5" viewBox="0 0 8 5" aria-hidden><path d="M0 5h8L4 0z" fill="#fff" /></svg>
        </button>
        <button aria-label="Printer" className="mr-[13px]">
          <svg width="16" height="15" viewBox="0 0 16 15" aria-hidden>
            <path d="M4 0h8v5H4z" fill="#fff" />
            <path d="M0 5h16v6H0z" fill="#d6d6d0" stroke="#444" strokeWidth=".6" />
            <path d="M3 8h10v2H3z" fill="#333" />
            <path d="M4 10h8v5H4z" fill="#fff" />
            <path d="M5 12.500h6" stroke="#888" />
          </svg>
        </button>
        <span className="mr-[10px] h-[15px] w-[15px] rounded-full bg-[radial-gradient(circle_at_40%_30%,#a6f77c,#3fc41c_60%,#2e9a14)]" />
        <button aria-label="Action center" className="mr-2">
          <svg width="15" height="15" viewBox="0 0 15 15" aria-hidden>
            <path d="M1.500 1v14" stroke="#fff" strokeWidth="1.500" />
            <path d="M3 2c3-1 5-1 6 1 2 1 4 1 6 0l-2 5c-2 1-4 0-5-1-2-1-3-1-5 0z" fill="#fff" />
          </svg>
        </button>
        <button aria-label="Network" className="mr-2">
          <svg width="17" height="16" viewBox="0 0 17 16" fill="none" stroke="#fff" strokeWidth="1.300" aria-hidden>
            <path d="M6 4.500h10v8H5V9M8 15h6M11 12.500V15" />
            <path d="M1 2v4h5V2M2.500 0v2M4.500 0v2M3.500 6v4" />
          </svg>
        </button>
        <button aria-label="Volume" className="mr-3">
          <svg width="17" height="14" viewBox="0 0 17 14" aria-hidden>
            <path d="M1 5h3l4-4v12L4 9H1z" fill="#fff" />
            <path d="M10 5q1.500 2 0 4M12 3q3 4 0 8M14 1.500q4 5.500 0 11" stroke="#fff" fill="none" />
          </svg>
        </button>
        <button className="mr-2 w-[66px] text-[11px] leading-[17px]"><time>11:34<br />06/06/2015</time></button>
        <button aria-label="Show desktop" className="h-full w-[14px] border border-[#5b7fa5] bg-gradient-to-br from-white/30 to-transparent" />
      </div>
    </div>
  )
}

export default function App() {
  return (
    <div className={`relative flex h-screen flex-col overflow-hidden text-[11px] ${UI}`}>
      <Header />
      <div className="flex h-[87px] shrink-0 border-t border-b border-t-[#aeb5bd] border-b-[#85898f] bg-gradient-to-b from-white via-[#f6f7f9] to-[#e7eaee]">
        <Clipboard />
        <FontGroup />
        <Paragraph />
        <StylesGroup />
        <Editing />
        <div className="w-[41px] shrink-0" />
      </div>
      <main className="flex min-h-0 grow bg-gradient-to-b from-[#cdd0d5] to-[#b8bbbf]">
        <div className="flex min-w-0 grow overflow-hidden pt-[7px]">
          <Worksheet />
        </div>
        <ScrollBar />
      </main>
      <StatusBar />
      <Taskbar />
      <PrinterPopup />
    </div>
  )
}
